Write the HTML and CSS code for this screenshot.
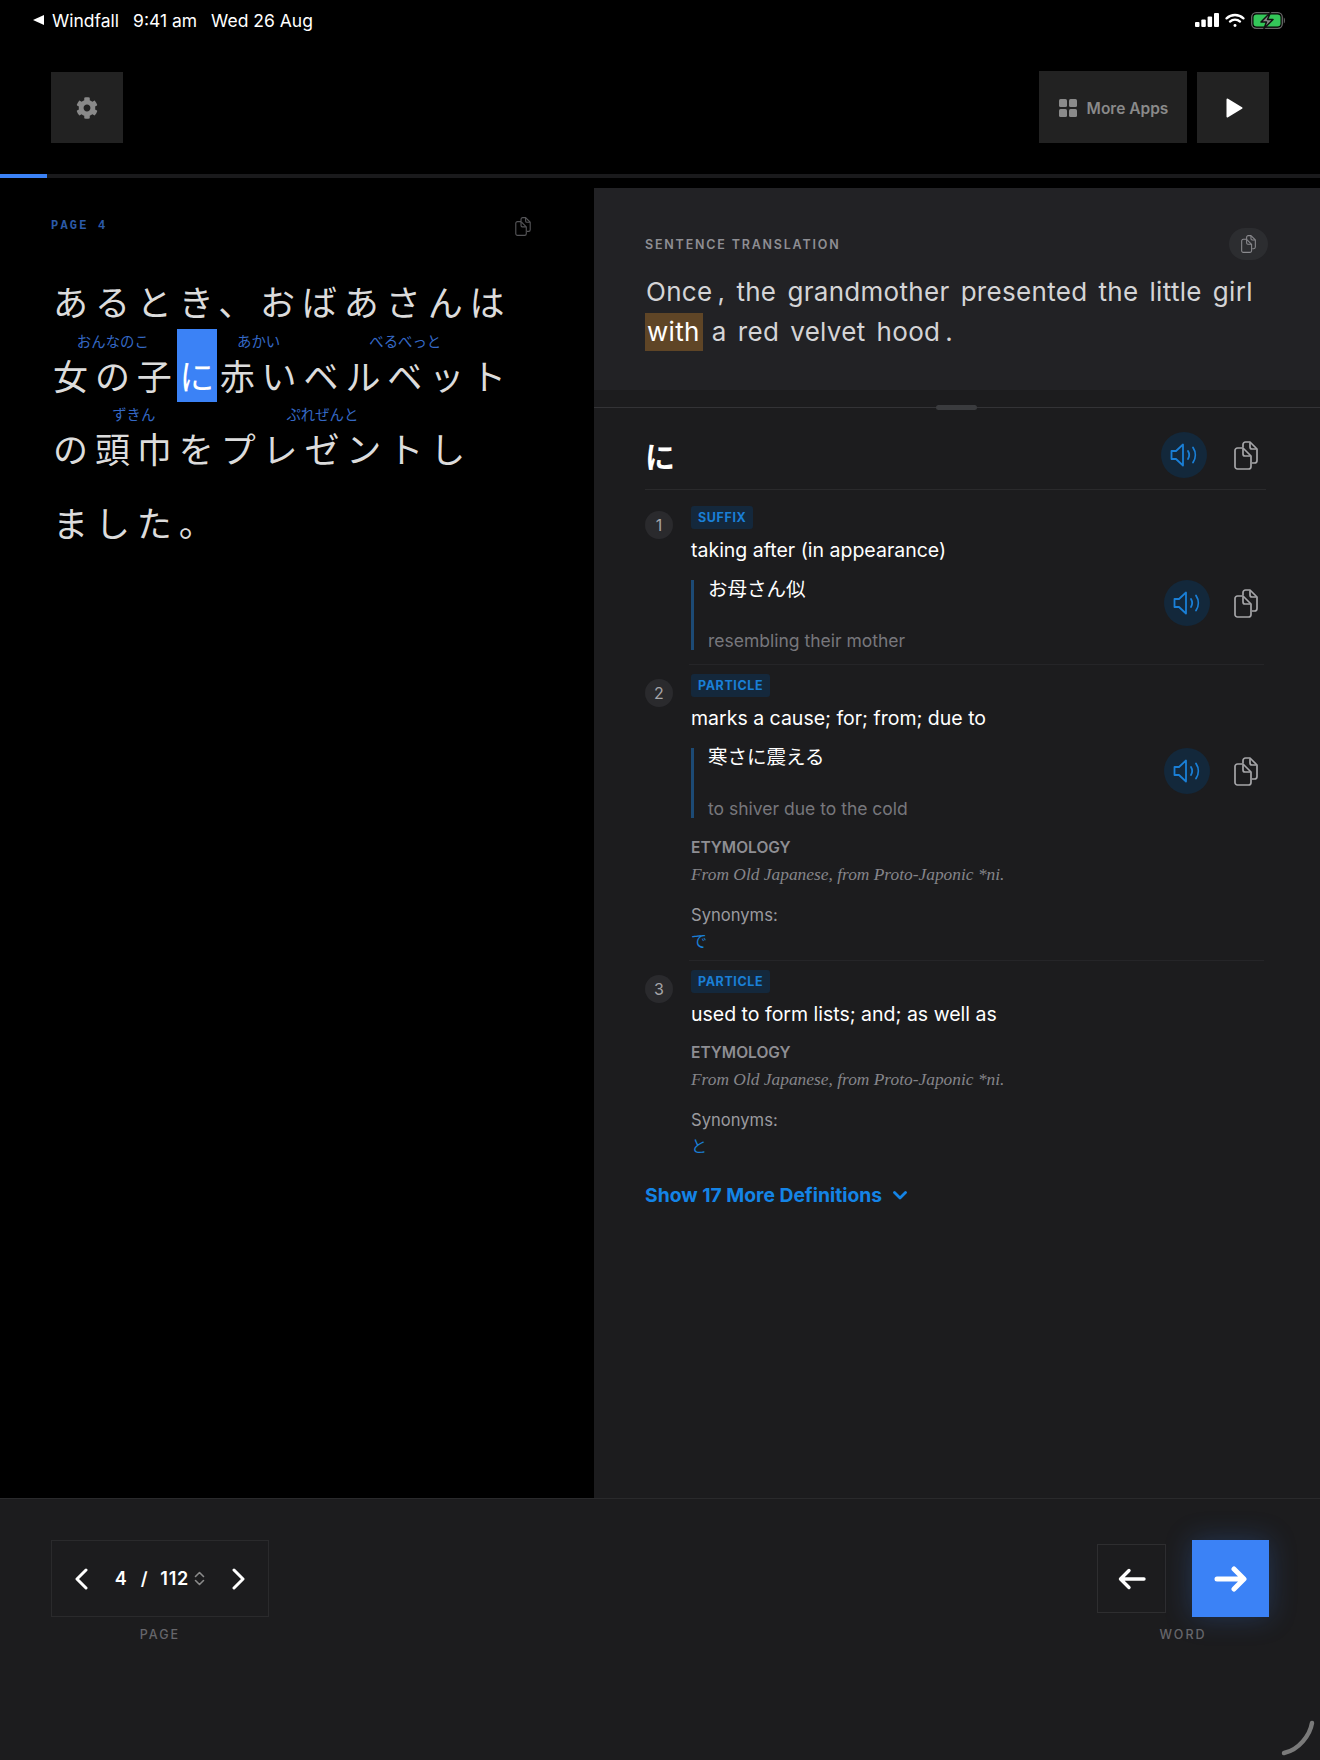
FILE: index.html
```html
<!DOCTYPE html>
<html lang="en">
<head>
    <meta charset="UTF-8">
    <meta name="viewport" content="width=device-width, initial-scale=1.0">
    <title>Windfall Reader</title>
    <link rel="stylesheet" href="styles.css">
</head>
<body>
    <svg class="icon-defs" width="0" height="0">
        <symbol id="icon-copy" viewBox="0 0 24 29">
            <path d="M9 6.500V3.500A2.500 2.500 0 0 1 11.500 1H16l7 7v11.500a2.500 2.500 0 0 1-2.500 2.500H18" fill="none" stroke="currentColor" stroke-width="1.700" stroke-linejoin="round"/>
            <path d="M3.500 7H9l8 8v10.500a2.500 2.500 0 0 1-2.500 2.500h-11A2.500 2.500 0 0 1 1 25.500V9.500A2.500 2.500 0 0 1 3.500 7Z" fill="none" stroke="currentColor" stroke-width="1.700" stroke-linejoin="round"/>
            <path d="M9 7.500V13a2 2 0 0 0 2 2h5.500M16 1.500V6a2 2 0 0 0 2 2h4.500" fill="none" stroke="currentColor" stroke-width="1.700"/>
        </symbol>
        <symbol id="icon-sound" viewBox="0 0 28 26">
            <path d="M1.500 9h4.500l7-6.500v21L6 17H1.500Z" fill="none" stroke="currentColor" stroke-width="1.800" stroke-linejoin="round"/>
            <path d="M18 9c1.500 2.500 1.500 5.500 0 8M23 5.500c3 4.500 3 10.500 0 15" fill="none" stroke="currentColor" stroke-width="1.800" stroke-linecap="round"/>
        </symbol>
    </svg>

    <div class="status-bar">
        <span class="back-triangle"></span>
        <span class="status-app">Windfall</span>
        <span>9:41 am</span>
        <span>Wed 26 Aug</span>
        <div class="status-icons">
            <svg width="24" height="14" viewBox="0 0 24 14" fill="#fff">
                <rect x="0" y="9" width="4.500" height="5" rx="1"/>
                <rect x="6.300" y="6.500" width="4.500" height="7.500" rx="1"/>
                <rect x="12.600" y="3.500" width="4.500" height="10.500" rx="1"/>
                <rect x="19" y="0" width="5" height="14" rx="1"/>
            </svg>
            <svg width="20" height="15" viewBox="0 0 19 14" fill="none" stroke="#fff" stroke-width="2.200" stroke-linecap="round">
                <path d="M1.500 5a11.500 11.500 0 0 1 16 0"/>
                <path d="M4.700 8a7 7 0 0 1 9.600 0"/>
                <circle cx="9.500" cy="11.800" r="1.400" fill="#fff" stroke="none"/>
            </svg>
            <svg width="35" height="17" viewBox="0 0 35 17">
                <rect x="0.700" y="0.700" width="30.600" height="15.600" rx="4.500" fill="none" stroke="#666" stroke-width="1.300"/>
                <rect x="2.500" y="2.500" width="27" height="12" rx="3" fill="#34c759"/>
                <path d="M32.800 5.500c1.500.5 1.500 5.500 0 6Z" fill="#666"/>
                <path d="M19.500 0.500 10 10h5.500L13 16.500 22 7.500h-5.500Z" fill="#8a8a8a" stroke="#111" stroke-width="1.500" stroke-linejoin="round"/>
            </svg>
        </div>
    </div>

    <div class="toolbar">
        <button class="tool-button">
            <svg class="gear" viewBox="0 0 512 512" fill="#8a8a8a"><path d="M487.400 315.700l-42.600-24.600c4.300-23.200 4.300-47 0-70.200l42.600-24.600c4.900-2.800 7.100-8.600 5.500-14-11.100-35.600-30-67.800-54.700-94.600-3.800-4.100-10-5.100-14.800-2.300L380.800 110c-17.900-15.400-38.500-27.300-60.800-35.100V25.800c0-5.600-3.900-10.500-9.400-11.700-36.700-8.200-74.300-7.800-109.200 0-5.500 1.200-9.400 6.100-9.400 11.700V75c-22.200 7.900-42.800 19.800-60.800 35.100L88.700 85.500c-4.900-2.800-11-1.900-14.800 2.300-24.700 26.700-43.600 58.900-54.700 94.600-1.700 5.400.6 11.200 5.500 14L67.300 221c-4.300 23.200-4.300 47 0 70.200l-42.600 24.600c-4.900 2.800-7.100 8.600-5.500 14 11.100 35.600 30 67.800 54.700 94.600 3.800 4.100 10 5.100 14.800 2.300l42.600-24.600c17.900 15.400 38.500 27.300 60.800 35.100v49.200c0 5.600 3.900 10.500 9.400 11.700 36.700 8.200 74.300 7.800 109.200 0 5.500-1.200 9.400-6.100 9.400-11.700v-49.200c22.200-7.900 42.800-19.800 60.800-35.100l42.600 24.600c4.900 2.800 11 1.900 14.800-2.300 24.700-26.700 43.600-58.900 54.700-94.600 1.500-5.500-.7-11.300-5.600-14.100zM256 336c-44.100 0-80-35.900-80-80s35.900-80 80-80 80 35.900 80 80-35.900 80-80 80z"/></svg>
        </button>
        <div class="toolbar-right">
            <button class="more-apps">
                <svg width="18" height="18" viewBox="0 0 18 18" fill="#8a8a8a">
                    <rect width="8" height="8" rx="1.500"/>
                    <rect x="10" width="8" height="8" rx="1.500"/>
                    <rect y="10" width="8" height="8" rx="1.500"/>
                    <rect x="10" y="10" width="8" height="8" rx="1.500"/>
                </svg>
                More Apps
            </button>
            <button class="tool-button">
                <svg class="play" width="17" height="20" viewBox="0 0 17 20" fill="#fff" stroke="#fff" stroke-width="2" stroke-linejoin="round"><path d="M1.500 1.500 15.500 10 1.500 18.500Z"/></svg>
            </button>
        </div>
    </div>

    <div class="progress"><div class="progress-fill"></div></div>

    <main class="main">
        <section class="reader">
            <div class="reader-head">
                <span class="page-tag">PAGE 4</span>
                <svg class="reader-copy"><use href="#icon-copy"/></svg>
            </div>
            <p class="reader-text">あるとき、おばあさんは<br><span class="word">女の子<span class="furi">おんなのこ</span></span><span class="current-word">に</span><span class="word">赤い<span class="furi">あかい</span></span><span class="word">ベルベット<span class="furi">べるべっと</span></span><br>の<span class="word">頭巾<span class="furi">ずきん</span></span>を<span class="word">プレゼント<span class="furi">ぷれぜんと</span></span>し<br>ました。</p>
        </section>

        <section class="details">
            <div class="translation">
                <div class="translation-head">
                    <h2>SENTENCE TRANSLATION</h2>
                    <button class="copy-pill"><svg><use href="#icon-copy"/></svg></button>
                </div>
                <p class="translation-text">Once&thinsp;, the grandmother presented the little girl <mark>with</mark> a red velvet hood&thinsp;.</p>
            </div>

            <div class="divider"><span class="handle"></span></div>

            <div class="word-head">
                <h1>に</h1>
                <div class="actions">
                    <button class="sound-button"><svg><use href="#icon-sound"/></svg></button>
                    <svg class="copy-icon"><use href="#icon-copy"/></svg>
                </div>
            </div>

            <div class="definition">
                <span class="def-number">1</span>
                <div class="def-body">
                    <span class="badge">SUFFIX</span>
                    <p class="def-text">taking after (in appearance)</p>
                    <div class="example-row">
                        <div class="example">
                            <p class="example-jp">お母さん似</p>
                            <p class="example-en">resembling their mother</p>
                        </div>
                        <div class="actions">
                            <button class="sound-button"><svg><use href="#icon-sound"/></svg></button>
                            <svg class="copy-icon"><use href="#icon-copy"/></svg>
                        </div>
                    </div>
                </div>
            </div>

            <div class="definition">
                <span class="def-number">2</span>
                <div class="def-body">
                    <span class="badge">PARTICLE</span>
                    <p class="def-text">marks a cause; for; from; due to</p>
                    <div class="example-row">
                        <div class="example">
                            <p class="example-jp">寒さに震える</p>
                            <p class="example-en">to shiver due to the cold</p>
                        </div>
                        <div class="actions">
                            <button class="sound-button"><svg><use href="#icon-sound"/></svg></button>
                            <svg class="copy-icon"><use href="#icon-copy"/></svg>
                        </div>
                    </div>
                    <h3 class="etym-title">ETYMOLOGY</h3>
                    <p class="etym-text">From Old Japanese, from Proto-Japonic *ni.</p>
                    <p class="syn-title">Synonyms:</p>
                    <p class="syn-word">で</p>
                </div>
            </div>

            <div class="definition">
                <span class="def-number">3</span>
                <div class="def-body last">
                    <span class="badge">PARTICLE</span>
                    <p class="def-text">used to form lists; and; as well as</p>
                    <h3 class="etym-title">ETYMOLOGY</h3>
                    <p class="etym-text">From Old Japanese, from Proto-Japonic *ni.</p>
                    <p class="syn-title">Synonyms:</p>
                    <p class="syn-word">と</p>
                </div>
            </div>

            <button class="show-more">
                Show 17 More Definitions
                <svg width="14" height="9" viewBox="0 0 14 9" fill="none" stroke="currentColor" stroke-width="2.800" stroke-linecap="round" stroke-linejoin="round"><path d="M1.500 1.500 7 7l5.500-5.500"/></svg>
            </button>
        </section>
    </main>

    <footer class="footer">
        <div class="nav-group">
            <div class="pager">
                <svg width="14" height="22" viewBox="0 0 14 22" fill="none" stroke="#fff" stroke-width="3" stroke-linecap="round" stroke-linejoin="round"><path d="M12 2 3 11l9 9"/></svg>
                <div class="pager-count">
                    <span class="pager-now">4</span>
                    <span class="pager-slash">/</span>
                    <span>112</span>
                    <svg width="11" height="15" viewBox="0 0 11 15" fill="none" stroke="#8a8a8a" stroke-width="1.600" stroke-linecap="round" stroke-linejoin="round"><path d="M1.500 5.500 5.500 1.500l4 4M1.500 9.500l4 4 4-4"/></svg>
                </div>
                <svg width="14" height="22" viewBox="0 0 14 22" fill="none" stroke="#fff" stroke-width="3" stroke-linecap="round" stroke-linejoin="round"><path d="m2 2 9 9-9 9"/></svg>
            </div>
            <span class="nav-label">PAGE</span>
        </div>

        <div class="nav-group">
            <div class="word-nav">
                <button class="word-prev">
                    <svg width="28" height="22" viewBox="0 0 28 22" fill="none" stroke="#fff" stroke-width="3.400" stroke-linecap="round" stroke-linejoin="round"><path d="M26 11H3M11 2.500 2.500 11l8.500 8.500"/></svg>
                </button>
                <button class="word-next">
                    <svg width="33" height="26" viewBox="0 0 33 26" fill="none" stroke="#fff" stroke-width="5" stroke-linecap="round" stroke-linejoin="round"><path d="M3 13h26M20 3l10 10-10 10"/></svg>
                </button>
            </div>
            <span class="nav-label">WORD</span>
        </div>
    </footer>

    <svg class="corner-spinner" width="34" height="36" viewBox="0 0 34 36" fill="none" stroke="#7a7a7a" stroke-width="4.500" stroke-linecap="round"><path d="M31 3C29 15 18 30 3 33"/></svg>
</body>
</html>
```

FILE: styles.css
```css
:root {
    --black: #000000;
    --panel: #1c1c1e;
    --panel-light: #222225;
    --tool: #222222;
    --line: #2a2a2c;
    --blue: #3b82f6;
    --link: #1a7fd6;
    --muted: #8e8e93;
}

* {
    box-sizing: border-box;
    margin: 0;
    padding: 0;
}

body {
    position: relative;
    width: 1320px;
    height: 1760px;
    overflow: hidden;
    background: var(--black);
    color: #fff;
    font-family: 'Inter', 'Noto Sans CJK JP', sans-serif;
}

button {
    border: none;
    background: none;
    color: inherit;
    font-family: inherit;
}

.icon-defs {
    position: absolute;
}

/* status bar */
.status-bar {
    height: 40px;
    padding: 0 34px 0 33px;
    display: flex;
    align-items: center;
    gap: 14px;
    font-size: 17.500px;
}

.back-triangle {
    width: 0;
    height: 0;
    border-top: 5.500px solid transparent;
    border-bottom: 5.500px solid transparent;
    border-right: 11px solid #fff;
    margin-right: -6px;
}

.status-icons {
    margin-left: auto;
    display: flex;
    align-items: center;
    gap: 6px;
}

/* toolbar */
.toolbar {
    height: 134px;
    padding: 32px 51px 0;
    display: flex;
    justify-content: space-between;
    align-items: flex-start;
}

.toolbar-right {
    display: flex;
    gap: 10px;
}

.tool-button {
    width: 72px;
    height: 71px;
    background: var(--tool);
    display: flex;
    align-items: center;
    justify-content: center;
}

.gear {
    width: 22px;
    height: 22px;
}

.play {
    margin-left: 3px;
}

.more-apps {
    width: 148px;
    height: 72px;
    margin-top: -1px;
    padding: 2px 0 0 1px;
    background: var(--tool);
    display: flex;
    align-items: center;
    justify-content: center;
    gap: 10px;
    color: #8a8a8a;
    font-size: 15.500px;
    font-weight: 600;
}

.progress {
    height: 4px;
    margin-bottom: 10px;
    background: #1a1a1c;
}

.progress-fill {
    width: 47px;
    height: 4px;
    background: var(--blue);
}

/* layout */
.main {
    display: flex;
    height: 1310px;
}

.reader {
    width: 594px;
    padding: 29px 63px 0 51px;
}

.reader-head {
    display: flex;
    justify-content: space-between;
    align-items: center;
    height: 18px;
}

.page-tag {
    color: #2c5aa8;
    font-family: 'Liberation Mono', monospace;
    font-size: 12px;
    font-weight: 700;
    letter-spacing: 2.200px;
}

.reader-copy {
    width: 16px;
    height: 19px;
    color: #555558;
}

.reader-text {
    margin-top: 29px;
    padding-left: 2px;
    white-space: nowrap;
    color: #dcdcdc;
    font-family: 'Noto Sans CJK JP', sans-serif;
    font-size: 35px;
    font-weight: 400;
    line-height: 73.500px;
    letter-spacing: 6.900px;
}

.word {
    position: relative;
    display: inline-block;
}

.furi {
    position: absolute;
    top: -6px;
    left: 0;
    right: 6px;
    color: #3569c6;
    font-size: 14.400px;
    letter-spacing: 0;
    line-height: 18px;
    text-align: center;
}

.current-word {
    position: relative;
    display: inline-block;
    width: 40px;
    margin: 0 3px 0 -2px;
    color: #fff;
    letter-spacing: 0;
    text-align: center;
}

.current-word::before {
    content: "";
    position: absolute;
    top: -8.500px;
    left: 0;
    right: 0;
    height: 73px;
    background: var(--blue);
    z-index: -1;
}

/* right column */
.details {
    width: 726px;
    background: var(--panel);
}

.translation {
    height: 202px;
    padding: 40px 52px 0 51px;
    background: var(--panel-light);
}

.translation-head {
    display: flex;
    justify-content: space-between;
    align-items: center;
}

.translation-head h2 {
    color: var(--muted);
    font-size: 12.500px;
    font-weight: 600;
    letter-spacing: 1.800px;
}

.copy-pill {
    width: 39px;
    height: 32px;
    border-radius: 16px;
    background: #2c2d30;
    color: #8a8a8e;
    display: flex;
    align-items: center;
    justify-content: center;
}

.copy-pill svg {
    width: 15px;
    height: 18px;
}

.translation-text {
    margin-top: 12px;
    padding-left: 1px;
    color: #d4d4d6;
    font-size: 26px;
    line-height: 39.500px;
    letter-spacing: 0.300px;
    word-spacing: 3.500px;
}

.translation-text mark {
    display: inline-block;
    height: 38px;
    margin: 0 -2px 0 -1px;
    padding: 0 3px 0 2px;
    background: #5f4526;
    color: #fff;
    line-height: 38px;
}

.divider {
    position: relative;
    height: 18px;
    border-bottom: 1px solid #333336;
}

.handle {
    position: absolute;
    left: 342px;
    bottom: -3px;
    width: 41px;
    height: 5px;
    border-radius: 3px;
    background: #3a3b3e;
}

.word-head {
    margin: 0 54px 0 51px;
    padding: 24px 0 11px;
    display: flex;
    justify-content: space-between;
    align-items: center;
    border-bottom: 1px solid var(--line);
}

.word-head h1 {
    font-family: 'Noto Sans CJK JP', sans-serif;
    font-size: 30px;
    font-weight: 700;
}

.actions {
    display: flex;
    align-items: center;
    gap: 27px;
    padding-right: 8px;
}

.example-row .actions {
    gap: 24px;
    padding-right: 6px;
}

.sound-button {
    width: 46px;
    height: 46px;
    border-radius: 50%;
    background: #13283b;
    color: var(--link);
    display: flex;
    align-items: center;
    justify-content: center;
}

.sound-button svg {
    width: 28px;
    height: 26px;
}

.copy-icon {
    width: 24px;
    height: 29px;
    color: #a5a5a8;
}

.definition {
    display: flex;
    gap: 16px;
    margin: 0 56px 0 51px;
}

.def-number {
    width: 28px;
    height: 28px;
    flex-shrink: 0;
    margin-top: 21px;
    border-radius: 50%;
    background: #2a2a2d;
    color: #a5a5a8;
    font-size: 16px;
    line-height: 28px;
    text-align: center;
}

.def-body {
    flex: 1;
    padding: 16px 0 9px 2px;
    border-bottom: 1px solid #252528;
}

.definition ~ .definition .def-body {
    padding-top: 9px;
}

.definition ~ .definition .def-number {
    margin-top: 13.500px;
}

.def-body.last {
    border-bottom: none;
}

.badge {
    display: inline-block;
    height: 23px;
    padding: 0 7px;
    border-radius: 3px;
    background: #14283c;
    color: var(--link);
    font-size: 12.500px;
    font-weight: 700;
    letter-spacing: 0.600px;
    line-height: 23px;
    vertical-align: top;
}

.def-text {
    margin-top: 8px;
    font-size: 19.500px;
    line-height: 26px;
}

.example-row {
    display: flex;
    justify-content: space-between;
    align-items: flex-start;
    margin: 17px 0 5px;
}

.example {
    height: 70px;
    padding-left: 14px;
    border-left: 3px solid #1c4a75;
}

.example-jp {
    margin-top: -1px;
    font-family: 'Noto Sans CJK JP', sans-serif;
    font-size: 19.500px;
    line-height: 18px;
}

.example-en {
    margin-top: 35px;
    color: #77777c;
    font-size: 17.500px;
    line-height: 18px;
}

.etym-title {
    margin-top: 17px;
    color: var(--muted);
    font-size: 15.500px;
    font-weight: 600;
    line-height: 18px;
}

.example-row + .etym-title {
    margin-top: 21px;
}

.etym-text {
    margin-top: 7px;
    color: #85858a;
    font-family: 'Liberation Serif', serif;
    font-size: 17.400px;
    font-style: italic;
    line-height: 20px;
}

.syn-title {
    margin-top: 21px;
    color: #9a9a9f;
    font-size: 16.600px;
    line-height: 20px;
}

.syn-word {
    margin: 5px 0 1px;
    color: var(--link);
    font-family: 'Noto Sans CJK JP', sans-serif;
    font-size: 16px;
    line-height: 20px;
}

.show-more {
    margin: 17px 0 0 51px;
    height: 26px;
    display: flex;
    align-items: center;
    gap: 11px;
    color: #1484e6;
    font-size: 19.300px;
    font-weight: 700;
}

/* bottom bar */
.footer {
    height: 262px;
    padding: 41px 51px 0;
    display: flex;
    justify-content: space-between;
    align-items: flex-start;
    background: var(--panel);
    border-top: 1px solid #2a2a2c;
}

.nav-group {
    display: flex;
    flex-direction: column;
    align-items: center;
}

.nav-label {
    margin-top: 11px;
    color: #66666b;
    font-size: 12.500px;
    font-weight: 500;
    letter-spacing: 2px;
    line-height: 14px;
}

.pager {
    width: 218px;
    height: 77px;
    padding: 0 22px;
    display: flex;
    align-items: center;
    justify-content: space-between;
    border: 1px solid #2a2a2c;
}

.pager-count {
    display: flex;
    align-items: center;
    font-size: 18px;
    font-weight: 600;
    letter-spacing: 0.800px;
}

.pager-now {
    margin-right: 13px;
}

.pager-slash {
    margin-right: 12px;
}

.pager-count svg {
    margin-left: 5px;
}

.word-nav {
    display: flex;
    align-items: center;
    gap: 26px;
}

.word-prev {
    width: 69px;
    height: 69px;
    border: 1px solid #2e2e30;
    display: flex;
    align-items: center;
    justify-content: center;
}

.word-next {
    width: 77px;
    height: 77px;
    background: var(--blue);
    box-shadow: 0 0 28px rgba(59, 130, 246, 0.25);
    display: flex;
    align-items: center;
    justify-content: center;
}

.corner-spinner {
    position: absolute;
    right: 5px;
    bottom: 4px;
}
```
